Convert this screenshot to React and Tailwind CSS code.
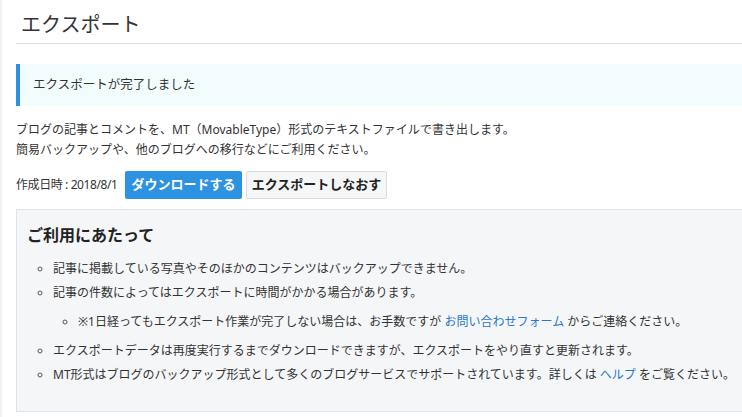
export default function App() {
  const font = { fontFamily: '"Noto Sans", "Noto Sans CJK JP", sans-serif' };
  return (
    <div className="min-h-[417px] w-[742px] overflow-hidden bg-white text-[#333] border-l-2 border-[#f0f1f3]" style={font}>
      <div className="pl-[14px]">
        <h1 className="pt-[12px] pb-[5px] pl-[5px] text-[20px] leading-[26px] border-b border-[#dddddd] text-[#333]">
          エクスポート
        </h1>

        <div className="mt-[20px] h-[42px] flex items-center bg-[#f2fcfc] border-l-[4px] border-[#2d92df] pl-[13px] text-[12.5px]">
          エクスポートが完了しました
        </div>

        <p className="mt-[14px] text-[12px] leading-[20px]">
          ブログの記事とコメントを、MT（MovableType）形式のテキストファイルで書き出します。
          <br />
          簡易バックアップや、他のブログへの移行などにご利用ください。
        </p>

        <div className="mt-[11px] flex items-center text-[12px]">
          <span className="w-[109px] tracking-[-0.4px]">作成日時 : 2018/8/1</span>
          <button className="h-[28px] w-[117px] rounded-[2px] bg-[#2d92df] text-white font-bold text-[13px]">
            ダウンロードする
          </button>
          <button className="ml-[4px] h-[28px] w-[141px] rounded-[2px] bg-[#f5f6f7] border border-[#dcdcdc] text-[#222] font-bold text-[13px]">
            エクスポートしなおす
          </button>
        </div>

        <div className="mt-[10px] bg-[#f5f6f8] border border-[#dde3e8] border-r-0 pt-[13px] pb-[24px] pl-[10px]">
          <h2 className="text-[16px] font-bold leading-[24px] text-[#222]">ご利用にあたって</h2>
          <ul className="mt-[10px] list-[circle] pl-[26px] text-[12px] leading-[24px] marker:text-[#555]">
            <li>記事に掲載している写真やそのほかのコンテンツはバックアップできません。</li>
            <li>
              記事の件数によってはエクスポートに時間がかかる場合があります。
              <ul className="list-[circle] pl-[25px] my-[5px]">
                <li>
                  ※1日経ってもエクスポート作業が完了しない場合は、お手数ですが{" "}
                  <a className="text-[#2a77c9]" href="#">お問い合わせフォーム</a> からご連絡ください。
                </li>
              </ul>
            </li>
            <li>エクスポートデータは再度実行するまでダウンロードできますが、エクスポートをやり直すと更新されます。</li>
            <li>
              MT形式はブログのバックアップ形式として多くのブログサービスでサポートされています。詳しくは{" "}
              <a className="text-[#2a77c9]" href="#">ヘルプ</a> をご覧ください。
            </li>
          </ul>
        </div>
      </div>
    </div>
  );
}
